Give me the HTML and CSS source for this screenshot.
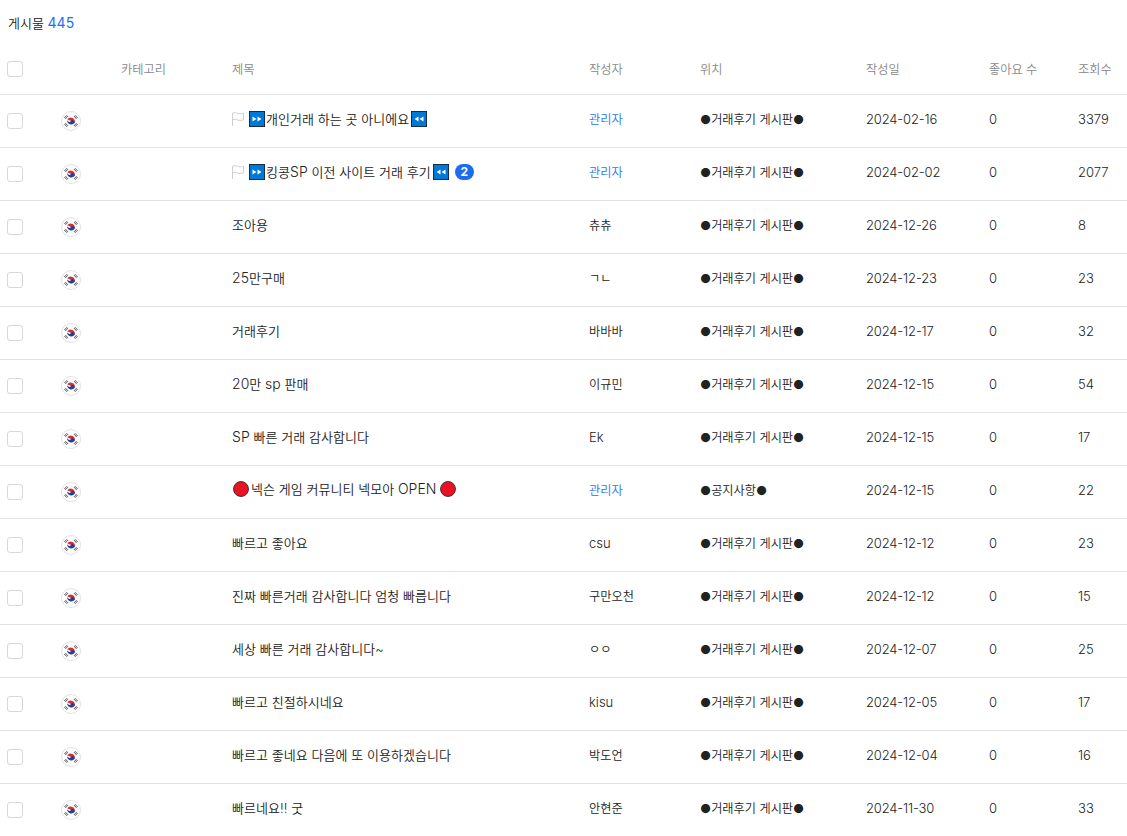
FILE: index.html
```
<!DOCTYPE html>
<html lang="ko">
<head>
<meta charset="utf-8">
<title>게시물</title>
<link rel="stylesheet" href="styles.css">
</head>
<body>
<svg class="defs" width="0" height="0" aria-hidden="true">
  <symbol id="kr" viewBox="0 0 20 20">
    <circle cx="10" cy="10" r="9.5" fill="#fdfdfd" stroke="#e2e2e2"/>
    <path d="M6.3 8.2a4.2 4.2 0 0 1 7.4 3.6z" fill="#d8293a"/>
    <path d="M6.3 8.2a4.2 4.2 0 0 0 7.4 3.6 2.1 2.1 0 0 0-3.7-1.8 2.1 2.1 0 0 1-3.7-1.8z" fill="#24408e"/>
    <g stroke="#5a5a5a" stroke-width="1"><path d="M3.4 7 6 4.2M4.4 7.9 7 5.1M13 5.1 15.6 7.9M14 4.2 16.6 7M3.4 13 6 15.8M4.4 12.1 7 14.9M13 14.9 15.6 12.1M14 15.8 16.6 13"/></g>
  </symbol>
  <symbol id="flag" viewBox="0 0 12 14">
    <path d="M.5 14V1.2c2.500-1 3.800-.4 5.200.2 1.500.5 3.300.6 5.800-.2v6.600c-2.500.8-4.300.7-5.800.2-1.400-.6-2.700-1.200-5.200-.2" fill="none" stroke="#cfcfcf"/>
  </symbol>
  <symbol id="ff" viewBox="0 0 16 16">
    <rect width="16" height="16" fill="#1f1f1f"/><rect x=".8" y=".8" width="14.4" height="14.4" fill="#0078d7"/>
    <path d="M3.500 5.500 7.500 8l-4 2.500zM8.500 5.500 12.500 8l-4 2.500z" fill="#fff"/>
  </symbol>
  <symbol id="rw" viewBox="0 0 16 16">
    <rect width="16" height="16" fill="#1f1f1f"/><rect x=".8" y=".8" width="14.4" height="14.4" fill="#0078d7"/>
    <path d="M7.500 5.500 3.500 8l4 2.500zM12.500 5.500 8.500 8l4 2.500z" fill="#fff"/>
  </symbol>
  <symbol id="red" viewBox="0 0 16 16">
    <circle cx="8" cy="8" r="7.500" fill="#e81224" stroke="#222" stroke-width=".8"/>
  </symbol>
</svg>
<main class="board">
  <div class="count">게시물 <span class="count-num">445</span></div>
  <table class="list">
    <colgroup>
      <col class="c-check"><col class="c-flag"><col class="c-cat"><col class="c-title"><col class="c-author"><col class="c-loc"><col class="c-date"><col class="c-like"><col class="c-view">
    </colgroup>
    <thead>
      <tr>
        <th class="cell-icon"><span class="box"></span></th><th></th><th>카테고리</th><th>제목</th><th>작성자</th><th>위치</th><th>작성일</th><th>좋아요 수</th><th>조회수</th>
      </tr>
    </thead>
    <tbody>
      <tr>
        <td class="cell-icon"><span class="box"></span></td><td class="cell-icon"><svg class="kr"><use href="#kr"/></svg></td><td></td>
        <td class="cell-rich"><span class="title"><svg class="flag"><use href="#flag"/></svg><svg class="emo"><use href="#ff"/></svg>개인거래 하는 곳 아니에요<svg class="emo emo-end"><use href="#rw"/></svg></span></td>
        <td class="admin">관리자</td><td>●거래후기 게시판●</td><td class="date">2024-02-16</td><td>0</td><td>3379</td>
      </tr>
      <tr>
        <td class="cell-icon"><span class="box"></span></td><td class="cell-icon"><svg class="kr"><use href="#kr"/></svg></td><td></td>
        <td class="cell-rich"><span class="title"><svg class="flag"><use href="#flag"/></svg><svg class="emo"><use href="#ff"/></svg>킹콩<span class="lat">SP</span>&nbsp;이전 사이트 거래 후기<svg class="emo emo-end"><use href="#rw"/></svg><span class="badge">2</span></span></td>
        <td class="admin">관리자</td><td>●거래후기 게시판●</td><td class="date">2024-02-02</td><td>0</td><td>2077</td>
      </tr>
      <tr><td class="cell-icon"><span class="box"></span></td><td class="cell-icon"><svg class="kr"><use href="#kr"/></svg></td><td></td><td>조아용</td><td>츄츄</td><td>●거래후기 게시판●</td><td class="date">2024-12-26</td><td>0</td><td>8</td></tr>
      <tr><td class="cell-icon"><span class="box"></span></td><td class="cell-icon"><svg class="kr"><use href="#kr"/></svg></td><td></td><td><span class="lat">25</span>만구매</td><td>ㄱㄴ</td><td>●거래후기 게시판●</td><td class="date">2024-12-23</td><td>0</td><td>23</td></tr>
      <tr><td class="cell-icon"><span class="box"></span></td><td class="cell-icon"><svg class="kr"><use href="#kr"/></svg></td><td></td><td>거래후기</td><td>바바바</td><td>●거래후기 게시판●</td><td class="date">2024-12-17</td><td>0</td><td>32</td></tr>
      <tr><td class="cell-icon"><span class="box"></span></td><td class="cell-icon"><svg class="kr"><use href="#kr"/></svg></td><td></td><td><span class="lat">20</span>만 <span class="lat">sp</span> 판매</td><td>이규민</td><td>●거래후기 게시판●</td><td class="date">2024-12-15</td><td>0</td><td>54</td></tr>
      <tr><td class="cell-icon"><span class="box"></span></td><td class="cell-icon"><svg class="kr"><use href="#kr"/></svg></td><td></td><td><span class="lat">SP</span> 빠른 거래 감사합니다</td><td class="name-lat">Ek</td><td>●거래후기 게시판●</td><td class="date">2024-12-15</td><td>0</td><td>17</td></tr>
      <tr>
        <td class="cell-icon"><span class="box"></span></td><td class="cell-icon"><svg class="kr"><use href="#kr"/></svg></td><td></td>
        <td class="cell-rich"><span class="title"><svg class="emo emo-red"><use href="#red"/></svg>넥슨 게임 커뮤니티 넥모아&nbsp;<span class="lat">OPEN</span><svg class="emo emo-red-end"><use href="#red"/></svg></span></td>
        <td class="admin">관리자</td><td>●공지사항●</td><td class="date">2024-12-15</td><td>0</td><td>22</td>
      </tr>
      <tr><td class="cell-icon"><span class="box"></span></td><td class="cell-icon"><svg class="kr"><use href="#kr"/></svg></td><td></td><td>빠르고 좋아요</td><td class="name-lat">csu</td><td>●거래후기 게시판●</td><td class="date">2024-12-12</td><td>0</td><td>23</td></tr>
      <tr><td class="cell-icon"><span class="box"></span></td><td class="cell-icon"><svg class="kr"><use href="#kr"/></svg></td><td></td><td>진짜 빠른거래 감사합니다 엄청 빠릅니다</td><td>구만오천</td><td>●거래후기 게시판●</td><td class="date">2024-12-12</td><td>0</td><td>15</td></tr>
      <tr><td class="cell-icon"><span class="box"></span></td><td class="cell-icon"><svg class="kr"><use href="#kr"/></svg></td><td></td><td>세상 빠른 거래 감사합니다~</td><td>ㅇㅇ</td><td>●거래후기 게시판●</td><td class="date">2024-12-07</td><td>0</td><td>25</td></tr>
      <tr><td class="cell-icon"><span class="box"></span></td><td class="cell-icon"><svg class="kr"><use href="#kr"/></svg></td><td></td><td>빠르고 친절하시네요</td><td class="name-lat">kisu</td><td>●거래후기 게시판●</td><td class="date">2024-12-05</td><td>0</td><td>17</td></tr>
      <tr><td class="cell-icon"><span class="box"></span></td><td class="cell-icon"><svg class="kr"><use href="#kr"/></svg></td><td></td><td>빠르고 좋네요 다음에 또 이용하겠습니다</td><td>박도언</td><td>●거래후기 게시판●</td><td class="date">2024-12-04</td><td>0</td><td>16</td></tr>
      <tr><td class="cell-icon"><span class="box"></span></td><td class="cell-icon"><svg class="kr"><use href="#kr"/></svg></td><td></td><td>빠르네요!! 굿</td><td>안현준</td><td>●거래후기 게시판●</td><td class="date">2024-11-30</td><td>0</td><td>33</td></tr>
    </tbody>
  </table>
</main>
</body>
</html>
```
FILE: styles.css
```
* { box-sizing: border-box; }
html, body { margin: 0; padding: 0; background: #fff; }
body {
  font-family: Inter, "Noto Sans CJK KR", sans-serif;
  font-size: 13px;
  line-height: 20px;
  font-weight: 350;
  color: #222;
}
.defs { display: block; height: 0; }
.board { width: 1127px; }
.count { height: 44px; padding: 13px 0 0 8px; }
.count-num { color: #2070f5; font-size: 14px; font-weight: 400; }
.list { width: 1127px; table-layout: fixed; border-collapse: separate; border-spacing: 0; }
.c-check { width: 60px; }
.c-flag { width: 61px; }
.c-cat { width: 111px; }
.c-title { width: 357px; }
.c-author { width: 111px; }
.c-loc { width: 166px; }
.c-date { width: 123px; }
.c-like { width: 89px; }
.c-view { width: 49px; }
th, td {
  padding: 0;
  text-align: left;
  white-space: nowrap;
  border-bottom: 1px solid #e2e2e2;
  vertical-align: middle;
}
th { height: 51px; padding-top: 2px; font-weight: 350; font-size: 12.2px; color: #888; }
th.cell-icon { padding-top: 0; }
td { height: 53px; padding-bottom: 4px; }
td:nth-child(4) { letter-spacing: 0.05px; }
td:nth-child(5), td:nth-child(6) { font-size: 12.2px; padding-bottom: 2px; }
td.name-lat { font-size: 13px; padding-bottom: 4px; }
.date { letter-spacing: -0.15px; }
td.cell-icon { padding-bottom: 0; }
td.cell-rich { padding-bottom: 3px; }
tbody tr:last-child td { border-bottom: 0; height: 52px; }
.box {
  display: block;
  width: 16px;
  height: 16px;
  margin-left: 7px;
  border: 1px solid #d5d8dc;
  border-radius: 3px;
  background: #fff;
}
.kr { display: block; width: 20px; height: 20px; margin: 0 0 0 1px; }
.title { display: inline-flex; align-items: center; }
.lat { font-size: 14px; }
.flag { width: 12px; height: 14px; margin-right: 5px; }
.emo { width: 16px; height: 16px; margin-right: 1px; }
.emo-end { margin: 0 0 0 2px; }
.emo-red { margin: 0 2px 0 1px; }
.emo-red-end { margin: 0 0 0 3px; }
.admin { color: #2b74f0; }
.badge {
  min-width: 19px;
  height: 16px;
  margin-left: 6px;
  border-radius: 8px;
  background: #1c6cf2;
  color: #fff;
  font-size: 12px;
  font-weight: 700;
  line-height: 16px;
  text-align: center;
}
```
